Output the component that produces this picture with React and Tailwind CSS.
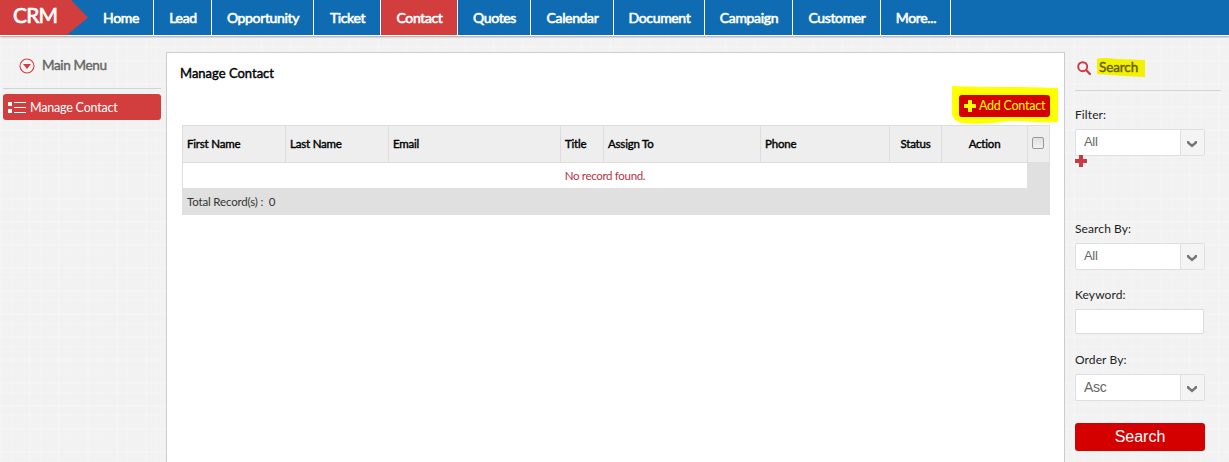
import React from 'react';

const NAV = [
  { label: 'Home', w: 'w-[66px]' },
  { label: 'Lead', w: 'w-[58px]' },
  { label: 'Opportunity', w: 'w-[102px]' },
  { label: 'Ticket', w: 'w-[67px]' },
  { label: 'Contact', w: 'w-[77px]', active: true },
  { label: 'Quotes', w: 'w-[73px]' },
  { label: 'Calendar', w: 'w-[83px]' },
  { label: 'Document', w: 'w-[91px]' },
  { label: 'Campaign', w: 'w-[88px]' },
  { label: 'Customer', w: 'w-[88px]' },
  { label: 'More...', w: 'w-[70px]' },
];

const COLUMNS = [
  { label: 'First Name', w: 'w-[103px]' },
  { label: 'Last Name', w: 'w-[103px]' },
  { label: 'Email', w: 'w-[172px]' },
  { label: 'Title', w: 'w-[43px]' },
  { label: 'Assign To', w: 'w-[157px]' },
  { label: 'Phone', w: 'w-[129px]' },
  { label: 'Status', w: 'w-[52px]', center: true },
  { label: 'Action', w: 'w-[86px]', center: true },
];

function Plus({ className }) {
  return (
    <svg viewBox="0 0 12 12" className={className} fill="currentColor">
      <path d="M4 0h4v4h4v4H8v4H4V8H0V4h4z" />
    </svg>
  );
}

function Select({ value, big }) {
  return (
    <div className="flex h-[27px] w-[130px] rounded-[2px] border border-[#dcdfe3] bg-white">
      <div className={`flex flex-1 items-center pl-2 pb-[1px] font-['Liberation_Sans',sans-serif] text-[#666] ${big ? 'text-[14px] tracking-[-0.3px]' : 'text-[13px] tracking-[-0.3px]'}`}>
        {value}
      </div>
      <div className="flex w-[24px] items-center justify-center border-l border-[#dcdfe3] bg-[#f4f4f4] pt-[3px]">
        <svg viewBox="0 0 10 8" className="mr-[1px] h-[8px] w-[10px]" fill="none" stroke="#777" strokeWidth="2.400">
          <path d="M1 1V2.500L5 6 9 2.500V1" />
        </svg>
      </div>
    </div>
  );
}

function Label({ children }) {
  return <div className="h-[16px] text-[12px] leading-[16px] tracking-[0.1px] whitespace-nowrap text-[#222]">{children}</div>;
}

export default function App() {
  return (
    <div className="flex h-[462px] w-[1229px] flex-col overflow-hidden bg-[#f2f2f2] bg-[repeating-linear-gradient(90deg,rgba(255,255,255,.18)_0_2px,transparent_2px_11px,rgba(255,255,255,.15)_11px_12px,transparent_12px_29px),repeating-linear-gradient(0deg,rgba(255,255,255,.18)_0_1px,transparent_1px_9px,rgba(255,255,255,.15)_9px_11px,transparent_11px_23px)] font-['Lato',sans-serif]">
      <header className="z-10 flex h-[36px] shrink-0 border-b border-white bg-[#0f6cb2] shadow-[0_1px_2px_rgba(0,0,0,.35)]">
        <div className="relative w-[88px]">
          <svg viewBox="0 0 88 35" className="absolute top-0 left-0 h-[35px] w-[88px]">
            <path d="M0 0H71L88 17.500 67 35H0z" fill="#d23d3e" />
          </svg>
          <span className="relative block pl-[13px] text-[21px] leading-[30px] tracking-[-0.8px] text-white [-webkit-text-stroke:0.7px_white]">CRM</span>
        </div>
        <nav className="flex">
          {NAV.map((n) => (
            <div key={n.label} className={`flex h-[35px] items-center justify-center border-r border-white pl-px text-[14px] tracking-[-0.35px] whitespace-nowrap text-white [-webkit-text-stroke:0.6px_white] ${n.w} ${n.active ? 'bg-[#d23d3e]' : ''}`}>
              {n.label}
            </div>
          ))}
        </nav>
      </header>

      <div className="flex flex-1">
        <aside className="w-[166px] pl-[3px]">
          <div className="flex h-[53px] w-[158px] items-center border-b border-[#d4d4d4] pl-[16px] pt-[7px]">
            <svg viewBox="0 0 16 16" className="h-[16px] w-[16px]">
              <circle cx="8" cy="8" r="7" fill="none" stroke="#d23d3e" strokeWidth="1.100" />
              <path d="M4 6H12L8 11z" fill="#d23d3e" />
            </svg>
            <span className="ml-[7px] text-[13.500px] tracking-[-0.350px] text-[#666] [-webkit-text-stroke:0.4px_#666]">Main Menu</span>
          </div>
          <div className="mt-[5px] flex h-[26px] w-[158px] items-center rounded-[3px] bg-[#d23d3e] pl-[5px] text-white">
            <svg viewBox="0 0 18 12" className="h-[12px] w-[18px]" fill="white">
              <path d="M0 1h4v4H0zM0 8h4v4H0zM6 1h12v1H6zM6 6h12v1H6zM6 11h12v1H6z" />
            </svg>
            <span className="ml-[4px] pt-[2px] text-[12.500px] tracking-[-0.200px] whitespace-nowrap">Manage Contact</span>
          </div>
        </aside>

        <main className="mt-[16px] w-[899px] border border-b-0 border-[#ccc] bg-white">
          <h1 className="h-[30px] pt-[11px] pl-[13px] text-[13px] leading-[18px] text-black [-webkit-text-stroke:0.4px_black]">Manage Contact</h1>
          <div className="relative ml-[792px] mt-[12px] h-[30px] w-[91px]">
            <svg viewBox="0 0 107 40" className="absolute top-[-9px] left-[-7px] h-[40px] w-[107px]">
              <path d="M0 0L34 1 70 1 106 2V36C88 38 65 33 50 36 35 38 22 38 10 37Q1 35 0 28z" fill="#ff0" />
            </svg>
            <button className="relative flex h-[22px] w-[91px] items-center rounded-[3px] bg-[#d40000] pl-[5px] text-[12.500px] tracking-[-0.250px] whitespace-nowrap text-[#ff0]">
              <Plus className="mr-[3px] h-[12px] w-[12px]" />
              <span className="pt-px">Add Contact</span>
            </button>
          </div>
          <div className="ml-[15px] w-[868px] text-[12px]">
            <div className="flex h-[38px] border border-[#dedede] bg-[#eee]">
              {COLUMNS.map((c) => (
                <div key={c.label} className={`flex items-center border-r border-[#ddd] text-[11.500px] tracking-[-0.200px] whitespace-nowrap text-black [-webkit-text-stroke:0.4px_black] ${c.center ? 'justify-center' : 'pl-[4px]'} ${c.w}`}>
                  {c.label}
                </div>
              ))}
              <div className="flex flex-1 items-center justify-center pb-[2px] pr-[2px]">
                <div className="h-[12px] w-[12px] rounded-[2px] border border-[#999] bg-linear-to-b from-[#e0e0e0] to-[#f2f2f2]" />
              </div>
            </div>
            <div className="flex h-[25px] border-l border-[#ddd] bg-[#e0e0e0]">
              <div className="flex w-[844px] items-center justify-center bg-white text-[11.500px] tracking-[-0.320px] text-[#b53346]">No record found.</div>
            </div>
            <div className="flex h-[27px] items-center bg-[#e0e0e0] pl-[5px] text-[11.500px] tracking-[-0.160px] text-[#333]">Total Record(s) :&nbsp; 0</div>
          </div>
        </main>

        <aside className="w-[164px] pl-[10px]">
          <div className="flex h-[55px] w-[146px] items-center border-b border-[#d4d4d4] pt-[9px] pl-[2px]">
            <svg viewBox="0 0 14 14" className="h-[14px] w-[14px]" fill="none" stroke="#cb3a42">
              <circle cx="5.700" cy="5.700" r="4.500" strokeWidth="1.900" />
              <path d="m9 9 4 4" strokeWidth="2.300" strokeLinecap="round" />
            </svg>
            <div className="relative ml-[8px] text-[13.500px] leading-[18px] tracking-[-0.100px] text-[#665c00] [-webkit-text-stroke:0.4px_#665c00]">
              <svg viewBox="0 0 48 19" className="absolute top-[-1px] left-[-2px] h-[19px] w-[48px]">
                <path d="M0 1Q1 0 9 0L20 1 48 2V19L27 18 0 16z" fill="#f2f200" />
              </svg>
              <span className="relative top-[-1px]">Search</span>
            </div>
          </div>
          <div className="mt-[16px]"><Label>Filter:</Label></div>
          <div className="mt-[6px]"><Select value="All" /></div>
          <Plus className="mt-[-1px] h-[12px] w-[12px] text-[#cb3a42]" />
          <div className="mt-[54px]"><Label>Search By:</Label></div>
          <div className="mt-[6px]"><Select value="All" /></div>
          <div className="mt-[17px]"><Label>Keyword:</Label></div>
          <div className="mt-[6px] h-[25px] w-[129px] rounded-[2px] border border-[#d9dde2] bg-white" />
          <div className="mt-[18px]"><Label>Order By:</Label></div>
          <div className="mt-[6px]"><Select value="Asc" big /></div>
          <button className="mt-[22px] flex h-[28px] w-[130px] items-center justify-center rounded-[3px] bg-[#d40000] font-['Liberation_Sans',sans-serif] text-[16px] text-white">Search</button>
        </aside>
      </div>
    </div>
  );
}
